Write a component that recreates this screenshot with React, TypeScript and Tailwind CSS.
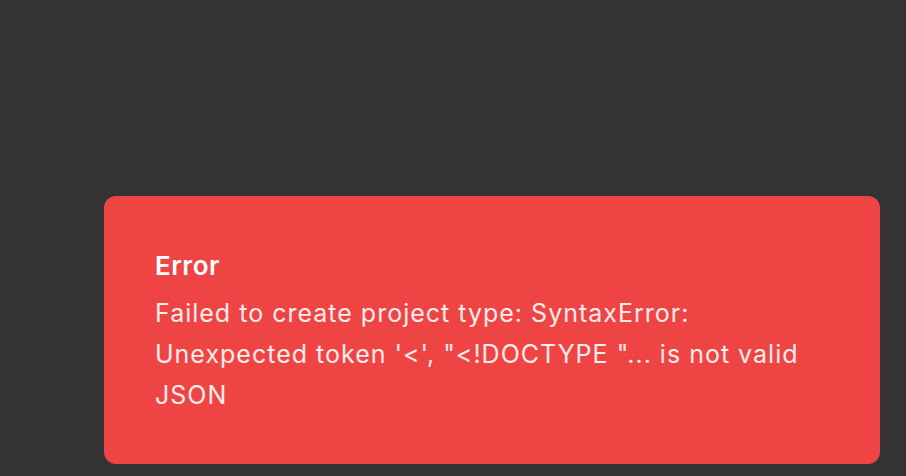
export default function App() {
  return (
    <div
      className="min-h-screen w-full bg-[#333333] pt-[196px] pl-[104px]"
      style={{ fontFamily: "Inter, 'Noto Sans', sans-serif" }}
    >
      <div className="w-[776px] rounded-[12px] bg-[#ef4444] pt-[54px] pb-[48px] px-[51px]">
        <h2 className="text-[26px] leading-[32px] font-semibold tracking-[0.02em] text-white">Error</h2>
        <p className="mt-[11px] text-[25px] leading-[41px] tracking-[0.04em] text-white/90">
          Failed to create project type: SyntaxError: Unexpected token '&lt;', "&lt;!DOCTYPE "... is not valid JSON
        </p>
      </div>
    </div>
  );
}
